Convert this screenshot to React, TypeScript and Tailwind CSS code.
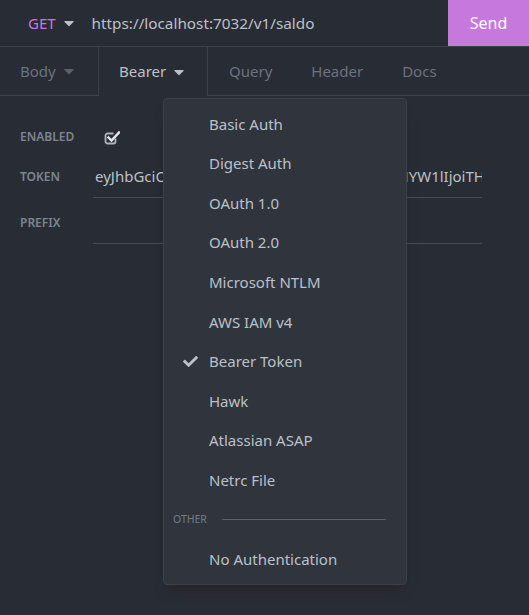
import { FaCaretDown, FaCheck } from "react-icons/fa";

const items = [
  "Basic Auth",
  "Digest Auth",
  "OAuth 1.0",
  "OAuth 2.0",
  "Microsoft NTLM",
  "AWS IAM v4",
  "Bearer Token",
  "Hawk",
  "Atlassian ASAP",
  "Netrc File",
];

function CheckSquare() {
  return (
    <svg viewBox="0 0 16 16" className="ml-[11px] h-[16px] w-[16px]" fill="none">
      <path d="M11.5 9.5v3a2 2 0 0 1-2 2h-6a2 2 0 0 1-2-2v-6a2 2 0 0 1 2-2h6" stroke="#aeb4bd" strokeWidth="1.8" />
      <path d="M4.5 8.5l3 3 7.5-8" stroke="#e2e5e9" strokeWidth="2.4" strokeLinecap="square" />
    </svg>
  );
}

function AuthMenu() {
  return (
    <div className="absolute left-[163px] top-[98px] w-[244px] rounded-[4px] border border-[#3b4049] bg-[#2f343d] py-[5px] shadow-lg">
      {items.map((item) => (
        <div key={item} className="flex h-[39.6px] items-center text-[15px] text-[#bcc1c9]">
          <span className="flex w-[45px] justify-end pr-[11px]">
            {item === "Bearer Token" && <FaCheck className="h-[15px] w-[15px] text-[#bcc1c9]" />}
          </span>
          {item}
        </div>
      ))}
      <div className="flex h-[39.6px] items-center pl-[9px] pr-[20px]">
        <span className="text-[10.5px] text-[#747b86]">OTHER</span>
        <span className="ml-[15px] h-px flex-1 bg-[#5a606b]" />
      </div>
      <div className="flex h-[39.6px] items-center pl-[45px] text-[15px] text-[#bcc1c9]">No Authentication</div>
    </div>
  );
}

export default function App() {
  return (
    <div className="relative h-[615px] w-[529px] overflow-hidden bg-[#282c34] font-['Noto_Sans',sans-serif]">
      <div className="flex h-[47px] items-center border-b border-[#3b4049]">
        <div className="flex items-center pl-[28px] pr-[15px] text-[15px] text-[#c678dd]">
          GET
          <FaCaretDown className="ml-[5px] h-[16px] w-[16px] text-[#bcc1c9]" />
        </div>
        <div className="flex-1 text-[15.3px] text-[#bcc1c9]">https://localhost:7032/v1/saldo</div>
        <div className="flex h-full w-[81px] items-center justify-center bg-[#c678dd] text-[16px] text-white">Send</div>
      </div>
      <div className="flex h-[49px] text-[15px]">
        <div className="flex w-[99px] items-center border-r border-b border-[#3b4049] pl-[20px] text-[#6b7280]">
          Body
          <FaCaretDown className="ml-[5px] h-[16px] w-[16px] text-[#5b616b]" />
        </div>
        <div className="flex w-[109px] items-center border-r border-[#3b4049] pl-[20px] text-[#bcc1c9]">
          Bearer
          <FaCaretDown className="ml-[5px] h-[16px] w-[16px] text-[#bcc1c9]" />
        </div>
        <div className="flex flex-1 items-center gap-[39px] border-b border-[#3b4049] pl-[21px] text-[#6b7280]">
          <span>Query</span>
          <span>Header</span>
          <span>Docs</span>
        </div>
      </div>
      <div className="flex flex-col pt-[26px] pr-[47px]">
        <div className="flex h-[29px] items-center">
          <span className="w-[93px] pl-[20px] text-[12px] font-semibold text-[#7d8592]">ENABLED</span>
          <CheckSquare />
        </div>
        <div className="mt-[12px] flex items-start">
          <span className="w-[93px] pl-[20px] pt-[5px] text-[12px] font-semibold text-[#7d8592]">TOKEN</span>
          <div className="flex h-[35px] flex-1 items-start overflow-hidden border-b border-[#464b55] pl-[2px] pt-[2px] text-[15px] whitespace-nowrap text-[#bcc1c9]">
            eyJhbGciOiJIUzI1NiIsInR5cCI6IkpXVCJ9.eyJuNYW1lIjoiTHV2YW1lIjoiTHV2Y
          </div>
        </div>
        <div className="mt-[10px] flex items-start">
          <span className="w-[93px] pl-[20px] pt-[6px] text-[12px] font-semibold text-[#7d8592]">PREFIX</span>
          <div className="h-[36px] flex-1 border-b border-[#464b55]" />
        </div>
      </div>
      <AuthMenu />
    </div>
  );
}
